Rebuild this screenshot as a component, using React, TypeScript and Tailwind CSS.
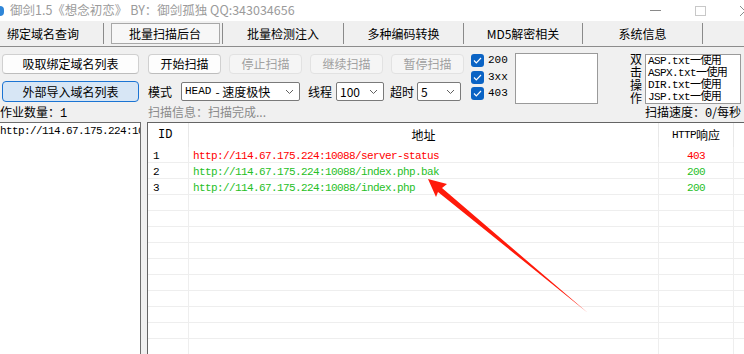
import React from 'react';

const mono = "font-['Liberation_Mono','Noto_Sans_CJK_SC',monospace]";

type BtnProps = { label: string; className: string; disabled?: boolean; focus?: boolean };

const Btn: React.FC<BtnProps> = ({ label, className, disabled, focus }) => {
  let tone = 'bg-[#fdfdfd] border-[#d0d0d0] border-b-[#bdbdbd] text-black';
  if (disabled) tone = 'bg-[#f5f5f5] border-[#e2e2e2] text-[#a0a0a0]';
  if (focus) tone = 'bg-[#d7e6f5] border-[#1b74d3] text-black';
  return (
    <div className={`${className} ${tone} border rounded-[4px] flex items-center justify-center text-[12px] leading-none`}>
      {label}
    </div>
  );
};

const Chevron = () => (
  <svg width="9" height="6" viewBox="0 0 9 6" className="ml-auto shrink-0">
    <path d="M1 1l3.5 3.5L8 1" fill="none" stroke="#606060" strokeWidth="1" />
  </svg>
);

const Check = () => (
  <div className="w-[13px] h-[13px] rounded-[3px] bg-[#0a63c4] flex items-center justify-center">
    <svg width="9" height="7" viewBox="0 0 9 7">
      <path d="M1 3.5l2.3 2.3L8 1" fill="none" stroke="#ffffff" strokeWidth="1.2" />
    </svg>
  </div>
);

const results = [
  { id: '1', url: 'http://114.67.175.224:10088/server-status', code: '403', color: 'text-[#ff0000]' },
  { id: '2', url: 'http://114.67.175.224:10088/index.php.bak', code: '200', color: 'text-[#26c026]' },
  { id: '3', url: 'http://114.67.175.224:10088/index.php', code: '200', color: 'text-[#26c026]' },
];

const emptyRows = Array.from({ length: 11 });

const tabs = [
  { label: '绑定域名查询', w: 'w-[104px] pl-[7px] justify-start' },
  { label: '批量扫描后台', w: 'w-[119px] justify-center', active: true },
  { label: '批量检测注入', w: 'w-[121px] justify-center' },
  { label: '多种编码转换', w: 'w-[120px] justify-center' },
  { label: 'MD5解密相关', w: 'w-[119px] justify-center' },
  { label: '系统信息', w: 'w-[120px] justify-center' },
];

export default function App() {
  return (
    <div className="relative w-[744px] h-[354px] overflow-hidden bg-[#f0f0f0] text-black font-['Noto_Sans_CJK_SC','Noto_Sans',sans-serif]">
      {/* Title bar */}
      <div className="h-[21px] bg-white flex items-center">
        <div className="w-[4px] h-[10px] rounded-r-full bg-[#2f86d8]" />
        <span className="ml-[6px] text-[12.5px] text-[#9b9b9b] leading-none whitespace-nowrap">
          御剑1.5《想念初恋》 BY：御剑孤独 QQ:343034656
        </span>
        <div className="ml-auto flex items-center">
          <div className="w-[11px] h-px bg-[#8a8a8a]" />
          <div className="ml-[34px] w-[11px] h-[10px] border border-[#c8c8c8]" />
          <svg width="10" height="10" viewBox="0 0 10 10" className="ml-[34px] -mr-[6px]">
            <path d="M0 0l10 10M10 0L0 10" stroke="#8a8a8a" strokeWidth="1" />
          </svg>
        </div>
      </div>

      {/* Tabs */}
      <div className="h-[26px] border-b border-[#8c8c8c] flex items-center">
        {tabs.map((t) => (
          <div key={t.label} className={`${t.w} h-[21px] border-r border-[#8a8a8a] flex items-center text-[12px] leading-none whitespace-nowrap`}>
            {t.active ? (
              <div className="ml-[4px] w-[109px] h-[21px] border border-[#a8a8a8] bg-[#f7f7f7] flex items-center justify-center">
                {t.label}
              </div>
            ) : (
              t.label
            )}
          </div>
        ))}
      </div>

      {/* Controls */}
      <div className="h-[75px] flex items-start">
        {/* left column */}
        <div className="w-[141px] flex flex-col">
          <Btn label="吸取绑定域名列表" className="ml-[2px] mt-[7px] w-[137px] h-[20px]" />
          <Btn label="外部导入域名列表" className="ml-[2px] mt-[7px] w-[137px] h-[21px]" focus />
          <div className="mt-[2px] text-[12px] leading-[16px] whitespace-nowrap">
            作业数量：<span className={mono}>1</span>
          </div>
        </div>

        {/* scan column */}
        <div className="ml-[7px] w-[316px] flex flex-col">
          <div className="mt-[7px] flex gap-[8px]">
            <Btn label="开始扫描" className="w-[73px] h-[20px]" />
            <Btn label="停止扫描" className="w-[73px] h-[20px]" disabled />
            <Btn label="继续扫描" className="w-[73px] h-[20px]" disabled />
            <Btn label="暂停扫描" className="w-[73px] h-[20px]" disabled />
          </div>
          <div className="mt-[8px] h-[19px] flex items-center text-[12px] leading-none whitespace-nowrap">
            <span className="w-[24px]">模式</span>
            <div className="ml-[9px] w-[119px] h-[19px] bg-white border border-[#7a7a7a] rounded-[2px] flex items-center pl-[3px] pr-[5px]">
              <span className={`${mono} text-[11px]`}>HEAD</span>
              <span className="ml-[4px]">- 速度极快</span>
              <Chevron />
            </div>
            <span className="ml-[8px] w-[24px]">线程</span>
            <div className="ml-[4px] w-[48px] h-[19px] bg-white border border-[#7a7a7a] rounded-[2px] flex items-center pl-[3px] pr-[5px]">
              <span>100</span>
              <Chevron />
            </div>
            <span className="ml-[6px] w-[24px]">超时</span>
            <div className="ml-[3px] w-[44px] h-[19px] bg-white border border-[#7a7a7a] rounded-[2px] flex items-center pl-[3px] pr-[5px]">
              <span>5</span>
              <Chevron />
            </div>
          </div>
          <div className="mt-[3px] text-[12px] leading-[16px] text-[#8a8a8a] whitespace-nowrap">扫描信息：扫描完成...</div>
        </div>

        {/* status checkboxes */}
        <div className={`ml-[7px] w-[44px] mt-[7px] flex flex-col ${mono} text-[11px] leading-none`}>
          <div className="flex items-center gap-[4px]"><Check /><span>200</span></div>
          <div className="mt-[4px] flex items-center gap-[4px]"><Check /><span>3xx</span></div>
          <div className="mt-[3px] flex items-center gap-[4px]"><Check /><span>403</span></div>
        </div>

        {/* text box */}
        <div className="mt-[6px] w-[83px] h-[51px] bg-white border border-[#9a9a9a]" />

        {/* vertical hint */}
        <div className="ml-[32px] mt-[5px] w-[13px] text-[12px] leading-[13px] flex flex-col">
          <span>双</span>
          <span>击</span>
          <span>操</span>
          <span>作</span>
        </div>

        {/* dictionaries */}
        <div className="ml-[2px] w-[96px] flex flex-col">
          <div className={`mt-[7px] h-[50px] bg-white border border-[#9a9a9a] pl-[2px] ${mono} text-[11px] tracking-[-0.6px] leading-[12px] overflow-hidden whitespace-nowrap`}>
            <div>ASP.txt一使用</div>
            <div>ASPX.txt一使用</div>
            <div>DIR.txt一使用</div>
            <div>JSP.txt一使用</div>
          </div>
          <div className="pr-[3px] text-right text-[12px] leading-[16px] whitespace-nowrap">
            扫描速度：<span className={mono}>0</span>/每秒
          </div>
        </div>
      </div>

      {/* Lists */}
      <div className="h-[232px] flex">
        <div className="w-[141px] bg-white border-t border-r border-[#6e6e6e] overflow-hidden">
          <div className={`${mono} text-[11px] tracking-[-0.6px] leading-[14px] pt-px whitespace-nowrap`}>
            http://114.67.175.224:10088/index.php
          </div>
        </div>
        <div className="ml-[6px] flex-1 bg-white border-t border-l border-[#646464] overflow-hidden">
          <div className="h-[24px] flex text-[12px] leading-none">
            <div className={`w-[41px] border-r border-[#e8e8e8] flex items-center pl-[10px] ${mono}`}>ID</div>
            <div className="w-[470px] border-r border-[#e8e8e8] flex items-center justify-center">地址</div>
            <div className="w-[75px] border-r border-[#e8e8e8] flex items-center justify-center">
              <span className={`${mono} text-[11px] tracking-[-0.6px]`}>HTTP</span>响应
            </div>
          </div>
          {results.map((r) => (
            <div key={r.id} className={`h-[16px] flex border-b border-[#eeeeee] ${mono} text-[11px] tracking-[-0.6px] leading-[15px]`}>
              <div className="w-[41px] border-r border-[#eeeeee] pl-[5px] pt-[2px]">{r.id}</div>
              <div className={`w-[470px] border-r border-[#eeeeee] pl-[4px] pt-[2px] ${r.color}`}>{r.url}</div>
              <div className={`w-[75px] border-r border-[#eeeeee] text-center pt-[2px] ${r.color}`}>{r.code}</div>
            </div>
          ))}
          {emptyRows.map((_, i) => (
            <div key={i} className="h-[16px] flex border-b border-[#eeeeee]">
              <div className="w-[41px] border-r border-[#eeeeee]" />
              <div className="w-[470px] border-r border-[#eeeeee]" />
              <div className="w-[75px] border-r border-[#eeeeee]" />
            </div>
          ))}
        </div>
      </div>

      {/* annotation arrow */}
      <svg className="absolute left-0 top-0 pointer-events-none" width="744" height="354" viewBox="0 0 744 354">
        <polygon points="428,179 447,184 442,188 588,313 438,192 436,197" fill="#ff1a0a" />
      </svg>
    </div>
  );
}
